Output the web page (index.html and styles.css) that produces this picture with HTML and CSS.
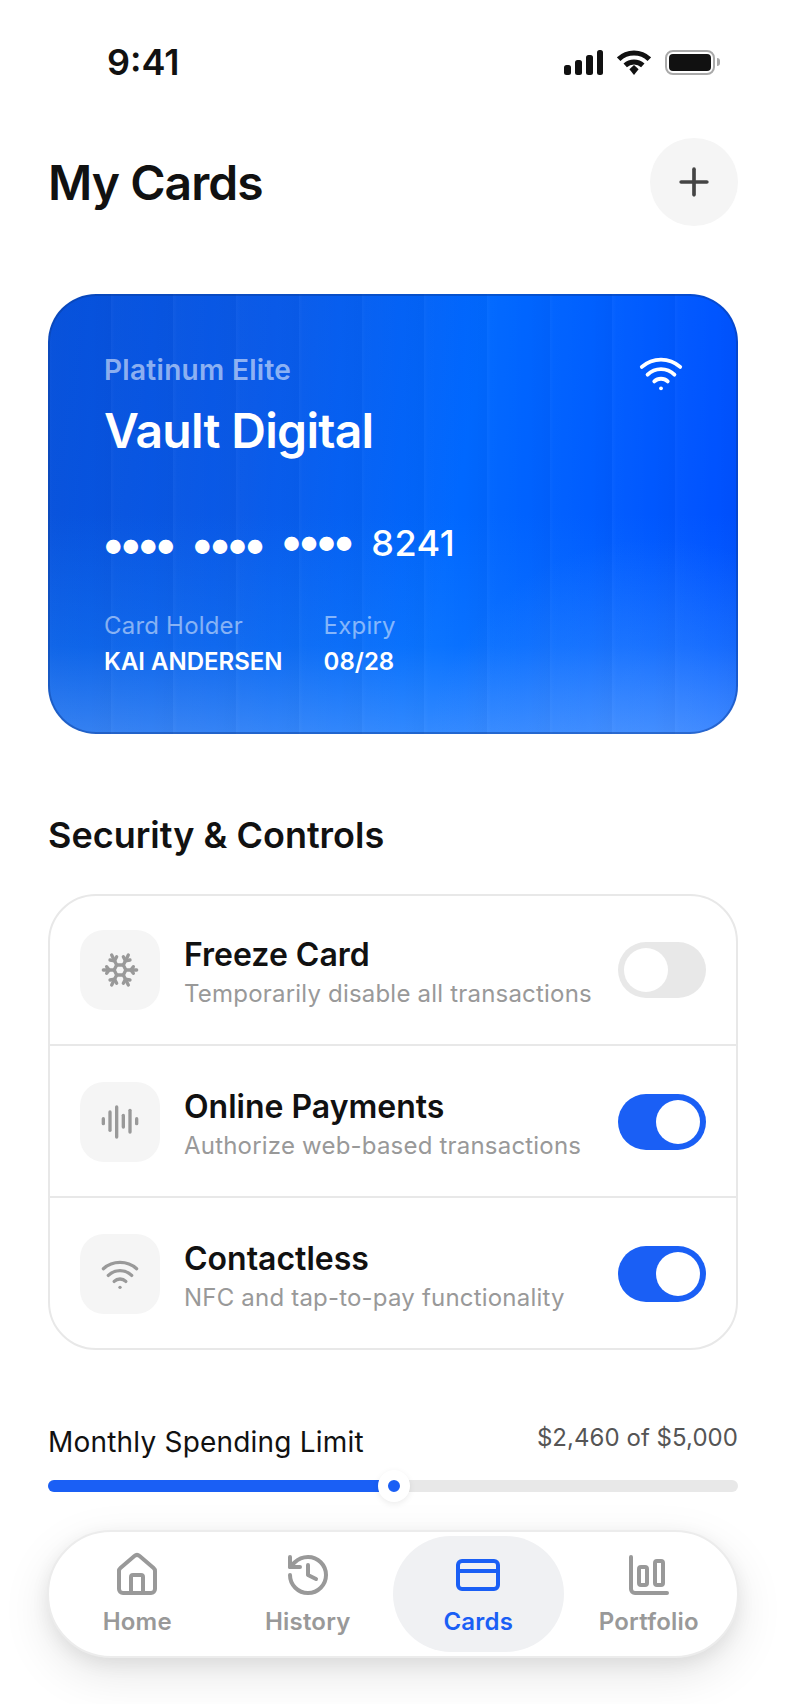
FILE: index.html
```html
<!DOCTYPE html>
<html lang="en">
<head>
    <meta charset="UTF-8">
    <meta name="viewport" content="width=device-width, initial-scale=1.0">
    <title>My Cards</title>
    <link rel="stylesheet" href="styles.css">
</head>
<body>
    <div class="status-bar">
        <span class="time">9:41</span>
        <div class="status-icons">
            <svg class="signal" width="39" height="25" viewBox="0 0 39 25" fill="#111">
                <rect x="0" y="15" width="7" height="10" rx="2.5"/>
                <rect x="11" y="10" width="7" height="15" rx="2.5"/>
                <rect x="22" y="5" width="7" height="20" rx="2.5"/>
                <rect x="33" y="0" width="6" height="25" rx="2.5"/>
            </svg>
            <svg class="status-wifi" width="34" height="25" viewBox="0 0 34 25" fill="none" stroke="#111" stroke-width="5">
                <path d="M1.7 9.2a22 22 0 0 1 30.6 0"/>
                <path d="M8.2 15.4a13 13 0 0 1 17.6 0"/>
                <path d="M12.4 19.3 17 14.9l4.6 4.4L17 25z" fill="#111" stroke="none"/>
            </svg>
            <div class="battery"><div class="battery-level"></div></div>
            <div class="battery-nub"></div>
        </div>
    </div>

    <header class="page-header">
        <h1>My Cards</h1>
        <button class="add-btn" aria-label="Add card">
            <svg width="44" height="44" viewBox="0 0 24 24" fill="none" stroke="#444" stroke-width="2" stroke-linecap="round" stroke-linejoin="round">
                <path d="M5 12h14"/><path d="M12 5v14"/>
            </svg>
        </button>
    </header>

    <section class="card">
        <div class="card-top">
            <div>
                <div class="card-tier">Platinum Elite</div>
                <div class="card-name">Vault Digital</div>
            </div>
            <svg class="card-wifi" width="46" height="46" viewBox="0 0 24 24" fill="none" stroke="#fff" stroke-width="2" stroke-linecap="round" stroke-linejoin="round">
                <path d="M12 20h.01"/><path d="M2 8.82a15 15 0 0 1 20 0"/><path d="M5 12.859a10 10 0 0 1 14 0"/><path d="M8.5 16.429a5 5 0 0 1 7 0"/>
            </svg>
        </div>
        <div class="card-number">
            <span class="dots">••••</span>
            <span class="dots">••••</span>
            <span class="dots dots-raised">••••</span>
            <span class="last-four">8241</span>
        </div>
        <div class="card-meta">
            <div>
                <div class="meta-label">Card Holder</div>
                <div class="meta-value">KAI ANDERSEN</div>
            </div>
            <div>
                <div class="meta-label">Expiry</div>
                <div class="meta-value">08/28</div>
            </div>
        </div>
    </section>

    <h2 class="section-title">Security &amp; Controls</h2>

    <section class="controls">
        <div class="control-row">
            <div class="control-icon">
                <svg width="40" height="40" viewBox="0 0 24 24" fill="none" stroke="#999" stroke-width="2" stroke-linecap="round" stroke-linejoin="round">
                    <path d="m10 20-1.25-2.5L6 18"/><path d="M10 4 8.75 6.5 6 6"/><path d="m14 20 1.25-2.5L18 18"/><path d="m14 4 1.25 2.5L18 6"/><path d="m17 21-3-6h-4"/><path d="m17 3-3 6 1.5 3"/><path d="M2 12h6.5L10 9"/><path d="m20 10-1.5 2 1.5 2"/><path d="M22 12h-6.5L14 15"/><path d="m4 10 1.5 2L4 14"/><path d="m7 21 3-6-1.5-3"/><path d="m7 3 3 6h4"/>
                </svg>
            </div>
            <div class="control-text">
                <div class="control-title">Freeze Card</div>
                <div class="control-desc">Temporarily disable all transactions</div>
            </div>
            <div class="toggle"><div class="knob"></div></div>
        </div>
        <div class="control-row">
            <div class="control-icon">
                <svg width="40" height="40" viewBox="0 0 24 24" fill="none" stroke="#999" stroke-width="2" stroke-linecap="round" stroke-linejoin="round">
                    <path d="M2 10v3"/><path d="M6 6v11"/><path d="M10 3v18"/><path d="M14 8v7"/><path d="M18 5v13"/><path d="M22 10v3"/>
                </svg>
            </div>
            <div class="control-text">
                <div class="control-title">Online Payments</div>
                <div class="control-desc">Authorize web-based transactions</div>
            </div>
            <div class="toggle on"><div class="knob"></div></div>
        </div>
        <div class="control-row">
            <div class="control-icon">
                <svg width="40" height="40" viewBox="0 0 24 24" fill="none" stroke="#999" stroke-width="2" stroke-linecap="round" stroke-linejoin="round">
                    <path d="M12 20h.01"/><path d="M2 8.82a15 15 0 0 1 20 0"/><path d="M5 12.859a10 10 0 0 1 14 0"/><path d="M8.5 16.429a5 5 0 0 1 7 0"/>
                </svg>
            </div>
            <div class="control-text">
                <div class="control-title">Contactless</div>
                <div class="control-desc">NFC and tap-to-pay functionality</div>
            </div>
            <div class="toggle on"><div class="knob"></div></div>
        </div>
    </section>

    <section class="limit">
        <div class="limit-head">
            <span class="limit-label">Monthly Spending Limit</span>
            <span class="limit-amount">$2,460 of $5,000</span>
        </div>
        <div class="limit-track">
            <div class="limit-fill" style="width: 49.2%">
                <div class="limit-thumb"></div>
            </div>
        </div>
    </section>

    <nav class="tab-bar">
        <a class="tab">
            <svg width="48" height="48" viewBox="0 0 24 24" fill="none" stroke="currentColor" stroke-width="2" stroke-linecap="round" stroke-linejoin="round">
                <path d="M15 21v-8a1 1 0 0 0-1-1h-4a1 1 0 0 0-1 1v8"/><path d="M3 10a2 2 0 0 1 .709-1.528l7-5.999a2 2 0 0 1 2.582 0l7 5.999A2 2 0 0 1 21 10v9a2 2 0 0 1-2 2H5a2 2 0 0 1-2-2z"/>
            </svg>
            <span>Home</span>
        </a>
        <a class="tab">
            <svg width="48" height="48" viewBox="0 0 24 24" fill="none" stroke="currentColor" stroke-width="2" stroke-linecap="round" stroke-linejoin="round">
                <path d="M3 12a9 9 0 1 0 9-9 9.75 9.75 0 0 0-6.74 2.74L3 8"/><path d="M3 3v5h5"/><path d="M12 7v5l4 2"/>
            </svg>
            <span>History</span>
        </a>
        <a class="tab active">
            <svg width="48" height="48" viewBox="0 0 24 24" fill="none" stroke="currentColor" stroke-width="2" stroke-linecap="round" stroke-linejoin="round">
                <rect width="20" height="14" x="2" y="5" rx="2"/><path d="M2 10h20"/>
            </svg>
            <span>Cards</span>
        </a>
        <a class="tab">
            <svg width="48" height="48" viewBox="0 0 24 24" fill="none" stroke="currentColor" stroke-width="2" stroke-linecap="round" stroke-linejoin="round">
                <path d="M3 3v16a2 2 0 0 0 2 2h16"/><rect x="15" y="5" width="4" height="12" rx="1"/><rect x="7" y="8" width="4" height="9" rx="1"/>
            </svg>
            <span>Portfolio</span>
        </a>
    </nav>
</body>
</html>
```

FILE: styles.css
```css
* {
    box-sizing: border-box;
}
body {
    height: 100vh;
    margin: 0;
    padding: 37px 48px 0;
    font-family: Inter, "Liberation Sans", sans-serif;
    background-color: #ffffff;
    color: #111111;
}

/* status bar */
.status-bar {
    display: flex;
    justify-content: space-between;
    align-items: center;
    height: 50px;
    padding-left: 59px;
    padding-right: 18px;
}
.time {
    font-size: 36px;
    font-weight: 600;
    line-height: 50px;
}
.status-icons {
    display: flex;
    align-items: center;
}
.status-wifi {
    margin-left: 14px;
}
.battery {
    width: 50px;
    height: 25px;
    margin-left: 14px;
    padding: 2px;
    border: 2px solid #aaaaaa;
    border-radius: 8px;
}
.battery-level {
    height: 100%;
    background-color: #111111;
    border-radius: 4px;
}
.battery-nub {
    width: 3px;
    height: 8px;
    margin-left: 2px;
    background-color: #aaaaaa;
    border-radius: 0 3px 3px 0;
}

/* header */
.page-header {
    display: flex;
    justify-content: space-between;
    align-items: center;
    margin-top: 51px;
}
h1 {
    margin: 0;
    font-size: 48px;
    font-weight: 600;
    letter-spacing: -0.96px;
}
.add-btn {
    display: flex;
    justify-content: center;
    align-items: center;
    width: 88px;
    height: 88px;
    padding: 0;
    border: none;
    border-radius: 50%;
    background-color: #f5f5f5;
}

/* card */
.card {
    height: 440px;
    margin-top: 68px;
    padding: 57px 54px;
    color: #ffffff;
    border: 2px solid rgba(10, 60, 150, 0.45);
    border-radius: 48px;
    background-origin: border-box;
    background-image:
        repeating-linear-gradient(90deg, rgba(255, 255, 255, 0.035) 0, rgba(255, 255, 255, 0.01) 4px, rgba(255, 255, 255, 0) 40px, rgba(0, 0, 40, 0.025) 62.7px),
        radial-gradient(circle at 88% 108%, rgba(110, 175, 255, 0.35) 0, rgba(110, 175, 255, 0) 30%),
        linear-gradient(180deg, rgba(30, 140, 255, 0) 50%, rgba(30, 140, 255, 0.3) 80%, rgba(90, 165, 255, 0.55) 100%),
        linear-gradient(100deg, #0650da 0%, #0a5ae8 30%, #0068ff 58%, #004dff 100%);
}
.card-top {
    display: flex;
    justify-content: space-between;
    align-items: flex-start;
}
.card-tier {
    font-size: 28px;
    font-weight: 600;
    line-height: 34px;
    letter-spacing: 0.3px;
    color: rgba(255, 255, 255, 0.55);
}
.card-name {
    margin-top: 15px;
    font-size: 48px;
    font-weight: 600;
    line-height: 58px;
    letter-spacing: -0.7px;
}
.card-wifi {
    margin-top: -3px;
    margin-right: -2px;
}
.card-number {
    display: flex;
    align-items: center;
    gap: 14px;
    margin-top: 58px;
    margin-left: -3px;
    font-size: 36px;
    font-weight: 500;
    line-height: 44px;
}
.dots {
    font-size: 46px;
    letter-spacing: -7px;
    margin-right: 5px;
}
.dots-raised {
    margin-bottom: 5px;
}
.last-four {
    margin-left: 3px;
    letter-spacing: 0.5px;
}
.card-meta {
    display: flex;
    gap: 41px;
    margin-top: 44px;
}
.meta-label {
    font-size: 24px;
    line-height: 30px;
    letter-spacing: 0.2px;
    color: rgba(255, 255, 255, 0.5);
}
.meta-value {
    margin-top: 6px;
    font-size: 24px;
    font-weight: 600;
    line-height: 30px;
}

/* security controls */
.section-title {
    margin: 78px 0 0;
    font-size: 36px;
    font-weight: 600;
    line-height: 46px;
}
.controls {
    margin-top: 36px;
    border: 2px solid #e8e8e8;
    border-radius: 48px;
}
.control-row {
    display: flex;
    align-items: center;
    padding: 36px 30px 34px;
    border-top: 2px solid #e8e8e8;
}
.control-row:first-child {
    padding-top: 34px;
    border-top: none;
}
.control-icon {
    display: flex;
    justify-content: center;
    align-items: center;
    flex-shrink: 0;
    width: 80px;
    height: 80px;
    margin-right: 24px;
    background-color: #f5f5f5;
    border-radius: 24px;
}
.control-text {
    flex: 1;
    padding-top: 6px;
}
.control-title {
    font-size: 32px;
    font-weight: 600;
    line-height: 36px;
}
.control-desc {
    margin-top: 6px;
    font-size: 24px;
    line-height: 30px;
    letter-spacing: 0.2px;
    color: #999999;
}
.toggle {
    flex-shrink: 0;
    width: 88px;
    height: 56px;
    padding: 6px;
    background-color: #e8e8e8;
    border-radius: 28px;
}
.toggle.on {
    display: flex;
    justify-content: flex-end;
    background-color: #1a5ff5;
}
.knob {
    width: 44px;
    height: 44px;
    background-color: #ffffff;
    border-radius: 50%;
}

/* spending limit */
.limit {
    margin-top: 73px;
}
.limit-head {
    display: flex;
    justify-content: space-between;
    align-items: flex-start;
}
.limit-label {
    font-size: 28px;
    line-height: 38px;
    letter-spacing: 0.2px;
}
.limit-amount {
    margin-top: -3px;
    font-size: 24px;
    line-height: 36px;
    letter-spacing: 0.05px;
    color: #555555;
}
.limit-track {
    height: 12px;
    margin-top: 19px;
    background-color: #e8e8e8;
    border-radius: 6px;
}
.limit-fill {
    position: relative;
    height: 100%;
    background-color: #1a5ff5;
    border-radius: 6px;
}
.limit-thumb {
    position: absolute;
    top: -10px;
    right: -23px;
    width: 32px;
    height: 32px;
    background-color: #1a5ff5;
    border: 10px solid #ffffff;
    border-radius: 50%;
    box-shadow: 0 2px 6px rgba(0, 0, 0, 0.08);
}

/* tab bar */
.tab-bar {
    display: grid;
    grid-template-columns: repeat(4, 1fr);
    height: 128px;
    margin: 38px -1px 0;
    padding: 4px 3px;
    background-color: #ffffff;
    border: 2px solid #ececec;
    border-radius: 64px;
    box-shadow: 0 16px 48px rgba(0, 0, 0, 0.1), 0 6px 18px rgba(0, 0, 0, 0.07);
}
.tab {
    display: flex;
    flex-direction: column;
    align-items: center;
    padding-top: 15px;
    font-size: 24px;
    font-weight: 600;
    line-height: 30px;
    letter-spacing: 0.2px;
    color: #999999;
    border-radius: 58px;
}
.tab span {
    margin-top: 8px;
}
.tab.active {
    color: #1a5ff5;
    background-color: #f0f1f3;
}
```
